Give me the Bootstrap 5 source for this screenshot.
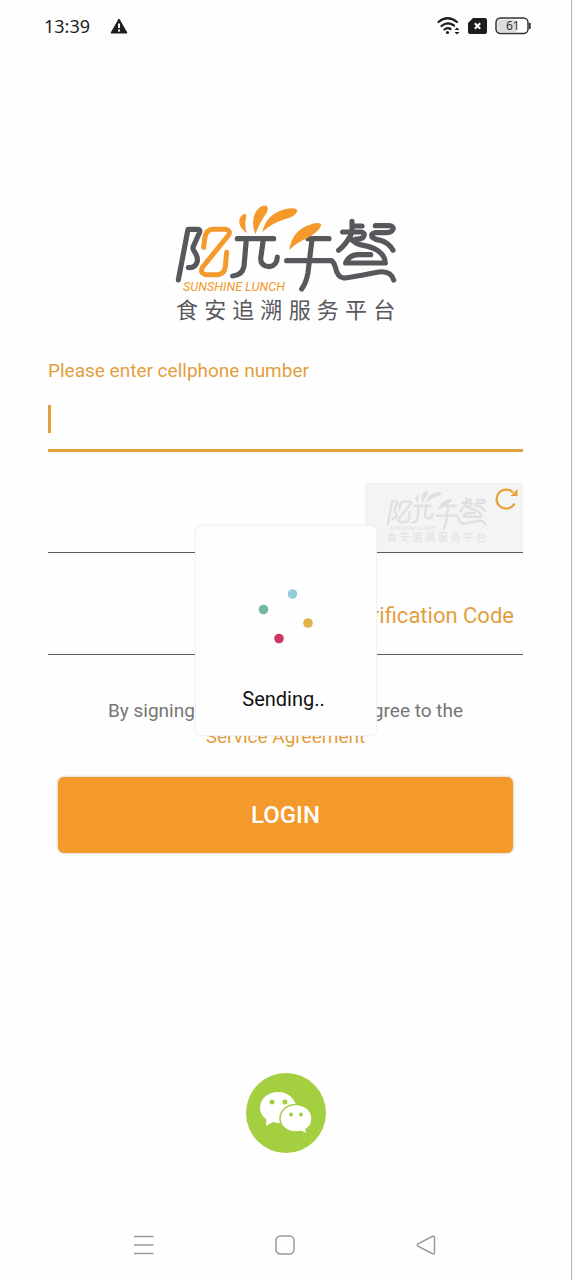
<!DOCTYPE html>
<html lang="en">
<head>
<meta charset="utf-8">
<meta name="viewport" content="width=device-width, initial-scale=1">
<title>Sunshine Lunch – Login</title>
<link href="https://cdn.jsdelivr.net/npm/bootstrap@5.3.0/dist/css/bootstrap.min.css" rel="stylesheet">
<style>
  :root { --brand: #f4992b; --brand-text: #e29f3f; --ink: #57585c; }
  body { font-family: Roboto, "Noto Sans CJK SC", sans-serif; background: #fefefe; color: #757575; font-size: 19px; line-height: 26px; }
  .screen { border-right: 1px solid #b4b4b4; }
  .status-bar { height: 52px; padding: 0 40px 0 44px; color: #1d1d1d; }
  .clock { font-family: "Noto Sans", Roboto, sans-serif; font-size: 18px; }
  .login-area { padding: 143px 48px 0; }
  .brand-logo { width: 240px; height: 135px; --line: var(--ink); --sun: var(--brand); }
  .watermark { width: 109px; height: 61px; --line: #dfe0e1; --sun: #dfe0e1; }
  .field { border: 0; border-bottom: 1px solid #5c5c5c; border-radius: 0; background: transparent; padding: 0; outline: 0; }
  .field-phone { height: 68px; border-bottom: 3px solid var(--brand-text); }
  .caret { width: 3px; height: 28px; top: 21px; left: 0; background: var(--brand-text); }
  .label-phone { color: var(--brand-text); }
  .row-captcha { margin-top: 31px; border-bottom: 1px solid #5c5c5c; }
  .row-code { margin-top: 24px; border-bottom: 1px solid #5c5c5c; height: 78px; }
  .row-captcha .field, .row-code .field { border: 0; }
  .captcha { width: 158px; height: 69px; background: #f4f4f4; border: 0; padding: 3px 4px 0 17px; }
  .btn-code { border: 0; background: none; color: var(--brand-text); font-size: 22px; line-height: 28px; padding: 0 9px; }
  .agreement { margin: 43px 0 0; }
  .agreement a { color: var(--brand-text); text-decoration: none; }
  .btn-login { margin: 27px 10px 0; height: 76px; background: #f4992b; color: #fff; border: 0; border-radius: 6px; font-size: 24px; font-weight: 500; box-shadow: 0 0 3px rgba(80,60,20,.35); }
  .btn-login:hover { background: #e98d1f; color: #fff; }
  .sending { top: 525px; width: 182px; height: 211px; background: #fefefe; border: 1px solid #f3f3f3; border-radius: 6px; box-shadow: 0 0 2px rgba(0,0,0,.05); color: #111; font-size: 20px; padding-bottom: 23px; gap: 42px; }
  .wechat { margin-bottom: 57px; }
  .nav-keys { height: 70px; padding: 0 135px 0 133px; }
  .key { border: 0; background: none; padding: 0; line-height: 0; }
</style>
</head>
<body>
<svg width="0" height="0" class="position-absolute" aria-hidden="true">
  <symbol id="logo" viewBox="2 0 720 405">
    <g fill="none" stroke-linecap="round" stroke-linejoin="round" stroke-width="15.500" style="stroke:var(--line)">
      <path d="M39 255L68 103H99Q106 104 102 114L84 154Q81 160 86 168Q98 184 96 199Q92 219 69 218"/>
      <path d="M216 131H325M243 133L236 214Q231 241 202 243M294 133L286 191Q286 213 312 215Q335 212 336 186"/>
      <path d="M428 131H491M440 134L428 232Q423 263 409 282"/>
      <path d="M364 197H498Q505 200 510 216Q516 247 535 249Q555 248 640 231Q676 226 685 255"/>
      <path d="M560 79V112M560 93H590M532 111H588Q602 114 595 125Q588 134 571 132M560 113Q545 146 520 166"/>
      <path d="M558 133Q570 147 594 151Q630 157 646 174Q660 187 660 204H541Q550 180 580 179H616"/>
      <path d="M630 92H671Q688 94 682 105Q677 113 662 113H629Q615 116 620 126Q629 134 645 136Q671 144 683 166"/>
    </g>
    <path d="M115 157L119 125Q124 104 142 103H180Q197 106 190 120L112 216Q102 234 121 239H158Q177 237 180 215L184 172" fill="none" stroke-width="15" stroke-linecap="round" stroke-linejoin="round" style="stroke:var(--sun)"/>
    <g style="fill:var(--sun)">
      <path d="M244 115Q218 94 222 76Q226 58 239 56Q244 57 242 69Q237 90 244 115Z"/>
      <path d="M270 118Q254 75 275 45Q290 29 303 32Q311 39 304 53Q284 80 270 118Z"/>
      <path d="M291 112Q302 58 358 43Q391 35 396 47Q393 63 358 73Q319 84 291 112Z"/>
      <path d="M372 165Q378 116 421 94Q463 76 468 90Q464 107 427 129Q394 142 372 165Z"/>
      <text x="53" y="289" font-family="Roboto, sans-serif" font-style="italic" font-weight="400" font-size="38">SUNSHINE LUNCH</text>
    </g>
    <text x="32 117 201 285 370 454 539 624" y="368" font-family="'Noto Sans CJK SC', sans-serif" font-weight="400" font-size="66" style="fill:var(--line)">食安追溯服务平台</text>
  </symbol>
</svg>

<div class="screen min-vh-100 d-flex flex-column position-relative">
  <header class="status-bar d-flex align-items-center justify-content-between">
    <div class="d-flex align-items-center gap-3">
      <span class="clock">13:39</span>
      <svg width="18" height="16" viewBox="0 0 18 16" class="ms-1"><path d="M9 1L17 15H1Z" fill="#1d1d1d" stroke="#1d1d1d" stroke-linejoin="round"/><path d="M9 5.500V10M9 11.500V13.500" stroke="#fff" stroke-width="2"/></svg>
    </div>
    <div class="d-flex align-items-center gap-2">
      <svg width="23" height="20" viewBox="0 0 23 20"><g fill="none" stroke="#1d1d1d" stroke-width="2.200" stroke-linecap="round"><path d="M1.500 6Q10.500-1.500 20 6M4.500 10Q10.500 5 17 9.500M7.500 13.500Q10.500 11 13.500 13"/></g><circle cx="10.500" cy="16.500" r="1.600" fill="#1d1d1d"/><path d="M17.500 14L20 11.500L22.500 14ZM17.500 16L20 18.500L22.500 16Z" fill="#1d1d1d"/></svg>
      <svg width="19" height="16" viewBox="0 0 19 16"><path d="M5 0H17Q19 0 19 2V14Q19 16 17 16H2Q0 16 0 14V5Z" fill="#1d1d1d"/><path d="M6.800 5.200L12.200 10.800M12.200 5.200L6.800 10.800" stroke="#fff" stroke-width="2"/></svg>
      <svg width="36" height="18" viewBox="0 0 36 18"><rect x="1" y="1" width="32" height="15.500" rx="4.500" fill="#fff" stroke="#333" stroke-width="1.500"/><path d="M5.500 2.500H21V15H5.500Q2.500 15 2.500 12V5.500Q2.500 2.500 5.500 2.500Z" fill="#dcdcdc"/><path d="M34.800 6V12" stroke="#333" stroke-width="1.800"/><text x="11" y="13" font-family="Noto Sans, sans-serif" font-size="12" fill="#333">61</text></svg>
    </div>
  </header>

  <main class="login-area d-flex flex-column">
    <svg class="brand-logo align-self-center" role="img" aria-label="Sunshine Lunch"><use href="#logo"/></svg>
    <form class="d-flex flex-column mt-4 pt-1">
      <label for="phone" class="label-phone">Please enter cellphone number</label>
      <div class="position-relative">
        <input id="phone" type="tel" class="field field-phone w-100 d-block">
        <span class="caret position-absolute"></span>
      </div>
      <div class="row-captcha d-flex">
        <input type="text" class="field flex-grow-1" aria-label="Image code">
        <button type="button" class="captcha d-flex align-items-start justify-content-between" aria-label="Refresh image code">
          <svg class="watermark"><use href="#logo"/></svg>
          <svg width="25" height="26" viewBox="0 0 25 26"><path d="M20.500 17.500A9.500 9.500 0 1 1 19 6.500" fill="none" stroke="#e9a13a" stroke-width="2.200"/><path d="M23.500 3V10H16.500Z" fill="#e9a13a"/></svg>
        </button>
      </div>
      <div class="row-code d-flex align-items-center">
        <input type="text" class="field flex-grow-1" aria-label="Verification code">
        <button type="button" class="btn-code">Verification Code</button>
      </div>
      <p class="agreement text-center">By signing in, you confirm you agree to the<br><a href="#">Service Agreement</a></p>
      <button type="submit" class="btn btn-login">LOGIN</button>
    </form>
  </main>

  <button type="button" class="wechat key mt-auto align-self-center" aria-label="Sign in with WeChat">
    <svg width="80" height="80" viewBox="0 0 80 80"><circle cx="40" cy="40" r="40" fill="#a3cf41"/>
      <path d="M32 19C22 19 14 26 14 34.500C14 39.500 16.500 43.500 20.500 46.500L20 53L27 49Q34 51 40 48.500C47 45 51 40 50.500 33.500C49 25 41 19 32 19Z" fill="#fff"/>
      <path d="M50 31.500C41 31.500 34 37.500 34 45.500C34 53.500 41 59 50 59Q53 59 55.500 58.500L61 61.500L60 56.500C64 54 66 50 66 45.500C66 37.500 59 31.500 50 31.500Z" fill="#fff" stroke="#a3cf41" stroke-width="1.500"/>
      <g fill="#a3cf41"><circle cx="26" cy="29" r="2.500"/><circle cx="39" cy="29" r="2.500"/><circle cx="45" cy="41.500" r="2"/><circle cx="55" cy="41.500" r="2"/></g></svg>
  </button>

  <nav class="nav-keys d-flex align-items-center justify-content-between" aria-label="System">
    <button type="button" class="key" aria-label="Recent"><svg width="21" height="20" viewBox="0 0 21 20"><path d="M1 1.500H20.500M1 10H20.500M1 18.500H20.500" stroke="#999" stroke-width="1.500"/></svg></button>
    <button type="button" class="key" aria-label="Home"><svg width="20" height="20" viewBox="0 0 20 20"><rect x="1" y="1" width="18" height="18" rx="4.500" fill="none" stroke="#999" stroke-width="1.500"/></svg></button>
    <button type="button" class="key" aria-label="Back"><svg width="20" height="20" viewBox="0 0 20 20"><path d="M2 8.800L16.500 1.300Q18.500 .8 18.500 2.500V17.500Q18.500 19.200 16.500 18.700L2 11.200Q.5 10 2 8.800Z" fill="none" stroke="#999" stroke-width="1.500"/></svg></button>
  </nav>

  <div class="sending position-absolute start-50 translate-middle-x d-flex flex-column align-items-center justify-content-end" role="status">
    <svg width="56" height="56" viewBox="0 0 56 56"><circle cx="34.500" cy="6" r="4.800" fill="#95ced9"/><circle cx="5.500" cy="21.500" r="4.800" fill="#72b8a0"/><circle cx="50" cy="35" r="4.800" fill="#dfb345"/><circle cx="21" cy="50.500" r="4.800" fill="#cb3760"/></svg>
    <span class="me-1">Sending..</span>
  </div>
</div>
<script src="https://cdn.jsdelivr.net/npm/bootstrap@5.3.0/dist/js/bootstrap.bundle.min.js"></script>
</body>
</html>
